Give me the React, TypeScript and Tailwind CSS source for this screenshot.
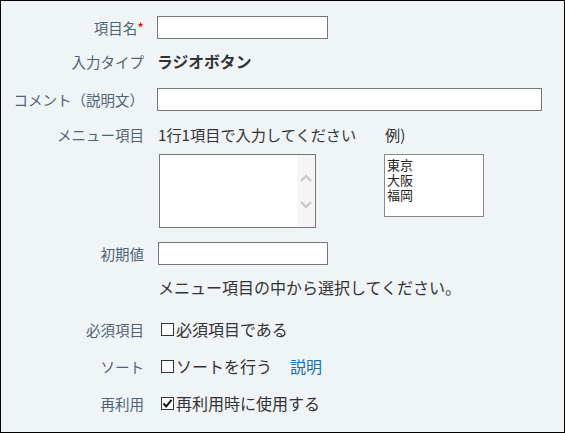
import React from "react";

const font = { fontFamily: '"Noto Sans CJK JP", "Noto Sans", sans-serif' };

function Label({ children }: { children: React.ReactNode }) {
  return (
    <div className="w-[143px] shrink-0 text-right text-[14.5px] text-[#4f6375] leading-[23px]">
      {children}
    </div>
  );
}

function Box({ checked }: { checked?: boolean }) {
  return (
    <span className="inline-flex w-[13px] h-[13px] border border-[#333] bg-white items-center justify-center mr-[2px] shrink-0">
      {checked && (
        <svg width="11" height="11" viewBox="0 0 11 11">
          <path d="M1.5 5.5 L4.2 8.5 L9.5 1.8" fill="none" stroke="#111" strokeWidth="2" />
        </svg>
      )}
    </span>
  );
}

export default function App() {
  return (
    <div
      className="w-[565px] h-[433px] border border-black bg-[#eff4f7] pt-[15px] text-[#333]"
      style={font}
    >
      {/* 項目名 */}
      <div className="flex h-[23px] items-center">
        <Label>
          項目名<span className="text-[#e00]">*</span>
        </Label>
        <div className="ml-[13px] w-[171px] h-[23px] border border-[#767676] bg-white" />
      </div>
      {/* 入力タイプ */}
      <div className="flex h-[23px] items-center mt-[11px]">
        <Label>入力タイプ</Label>
        <div className="ml-[13px] text-[15.8px] font-bold text-[#333] leading-[23px]">ラジオボタン</div>
      </div>
      {/* コメント */}
      <div className="flex h-[23px] items-center mt-[15px]">
        <Label>コメント（説明文）</Label>
        <div className="ml-[13px] w-[385px] h-[23px] border border-[#767676] bg-white" />
      </div>
      {/* メニュー項目 */}
      <div className="flex mt-[12px]">
        <Label>メニュー項目</Label>
        <div className="ml-[14px] flex">
          <div className="w-[226px]">
            <div className="text-[15.2px] leading-[23px] text-[#333]">1行1項目で入力してください</div>
            <div className="mt-[8px] ml-[1px] w-[157px] h-[74px] border border-[#767676] bg-white flex justify-end">
              <div className="w-[18px] h-full bg-[#f5f5f5] flex flex-col items-center justify-center gap-[19px]">
                <svg width="12" height="8" viewBox="0 0 12 8">
                  <path d="M1 7 L6 2 L11 7" fill="none" stroke="#c6c6c6" strokeWidth="2" />
                </svg>
                <svg width="12" height="8" viewBox="0 0 12 8">
                  <path d="M1 1 L6 6 L11 1" fill="none" stroke="#c6c6c6" strokeWidth="2" />
                </svg>
              </div>
            </div>
          </div>
          <div>
            <div className="text-[15.2px] leading-[23px] text-[#333] ml-[1px]">例)</div>
            <div className="mt-[8px] w-[100px] h-[63px] border border-[#8a8a8a] bg-white pl-[2px] pt-[2px] text-[13px] leading-[15px] text-[#222]">
              <div>東京</div>
              <div>大阪</div>
              <div>福岡</div>
            </div>
          </div>
        </div>
      </div>
      {/* 初期値 */}
      <div className="flex h-[23px] items-center mt-[14px]">
        <Label>初期値</Label>
        <div className="ml-[14px] w-[170px] h-[23px] border border-[#767676] bg-white" />
      </div>
      <div className="flex h-[23px] items-center mt-[11px]">
        <div className="w-[143px] shrink-0" />
        <div className="ml-[14px] text-[16px] leading-[23px]">メニュー項目の中から選択してください。</div>
      </div>
      {/* 必須項目 */}
      <div className="flex h-[23px] items-center mt-[19px]">
        <Label>必須項目</Label>
        <div className="ml-[17px] flex items-center text-[16px] leading-[23px]">
          <Box />
          必須項目である
        </div>
      </div>
      {/* ソート */}
      <div className="flex h-[23px] items-center mt-[14px]">
        <Label>ソート</Label>
        <div className="ml-[17px] flex items-center text-[16px] leading-[23px]">
          <Box />
          ソートを行う
          <span className="ml-[18px] text-[#1f6fae]">説明</span>
        </div>
      </div>
      {/* 再利用 */}
      <div className="flex h-[23px] items-center mt-[14px]">
        <Label>再利用</Label>
        <div className="ml-[17px] flex items-center text-[16px] leading-[23px]">
          <Box checked />
          再利用時に使用する
        </div>
      </div>
    </div>
  );
}
